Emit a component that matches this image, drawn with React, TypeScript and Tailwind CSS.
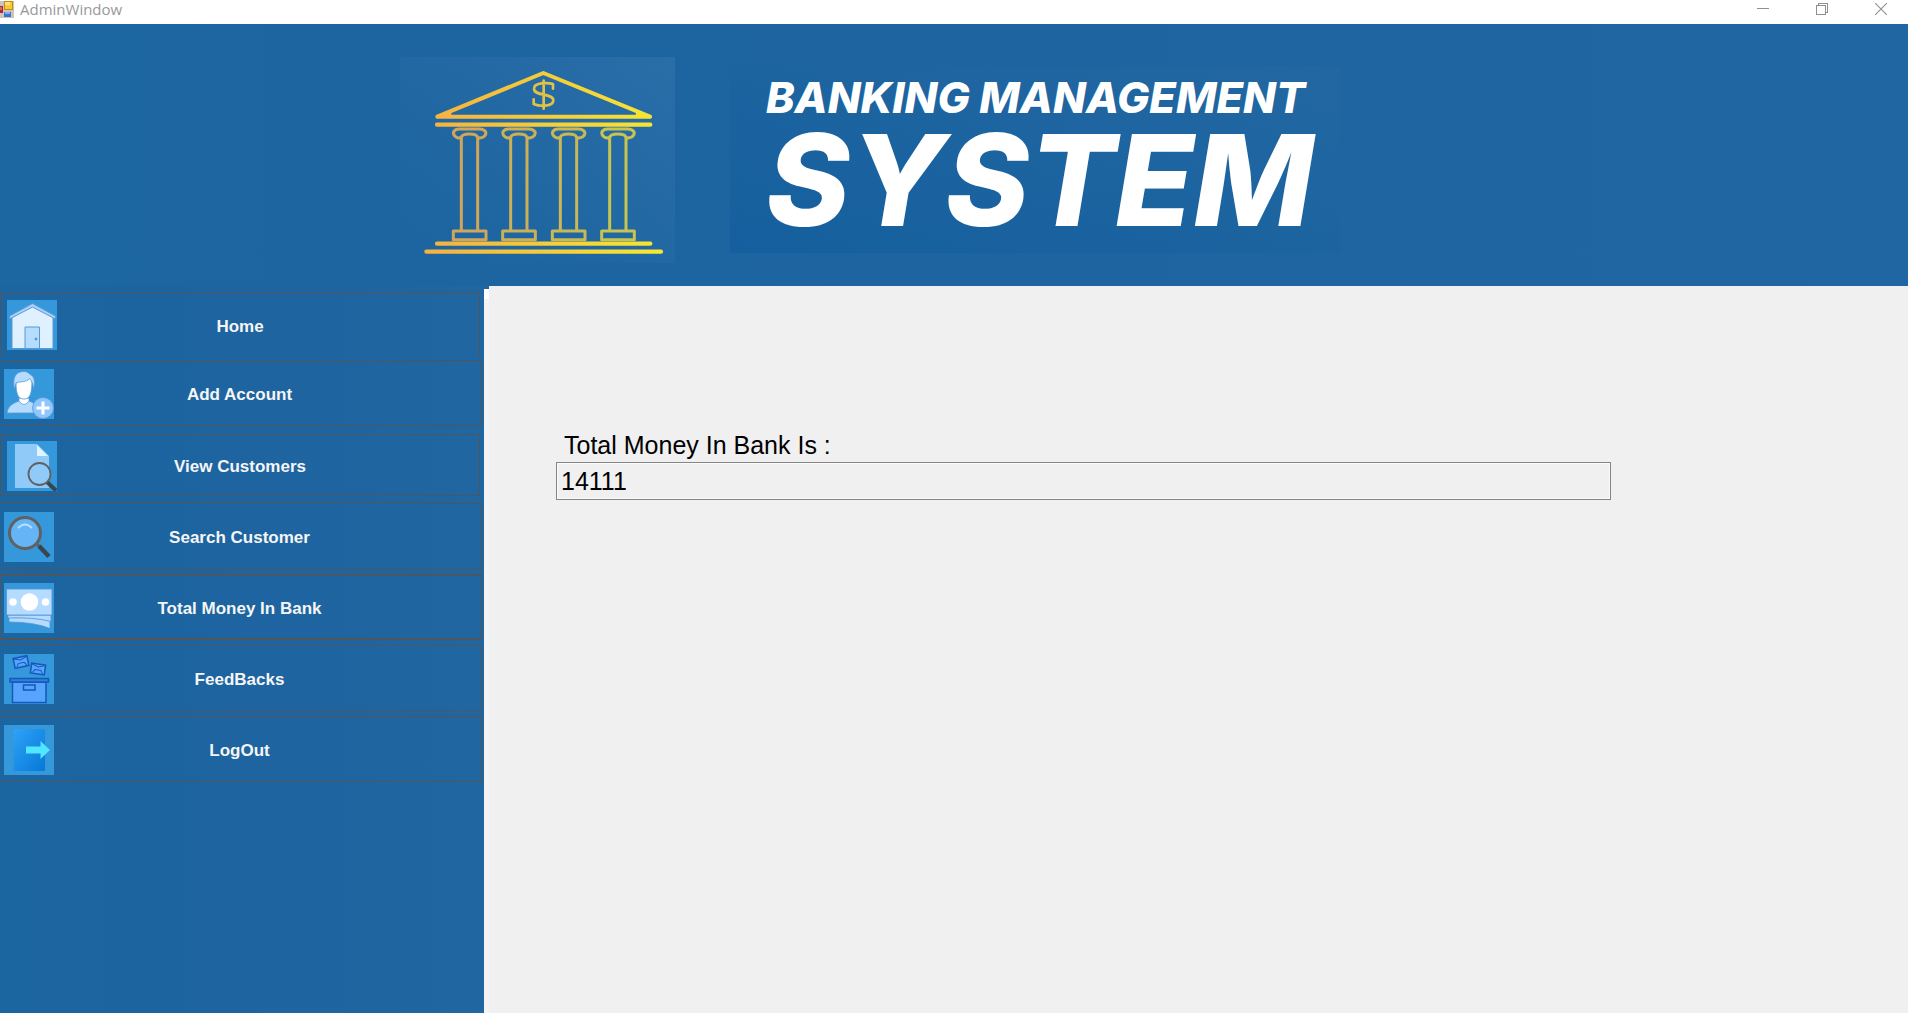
import React from "react";

function AppIcon() {
  return (
    <svg width="14" height="18" viewBox="0 0 14 18" aria-hidden="true">
      <rect x="0" y="1" width="14" height="17" fill="#c9c6c0" />
      <rect x="0" y="6" width="3" height="7" fill="#b3262b" />
      <rect x="0" y="7" width="2" height="3" fill="#d9656a" />
      <rect x="4" y="1" width="9" height="9" fill="#c78a12" />
      <rect x="5" y="2" width="7" height="7" fill="#fbc92f" />
      <rect x="5" y="2" width="5" height="3" fill="#fde07c" />
      <rect x="4" y="12" width="7" height="5" fill="#3f6fd0" />
      <rect x="5" y="12" width="5" height="2" fill="#85aef0" />
    </svg>
  );
}

function TitleBar() {
  const control = "flex h-6 w-[54px] items-start justify-center pt-[3px] text-[#8f8f8f]";
  return (
    <div className="flex h-6 shrink-0 items-start bg-white">
      <AppIcon />
      <h1 className="ml-1.5 font-['Open_Sans','Noto_Sans',sans-serif] text-[15px] leading-[18px] text-[#999999]">
        AdminWindow
      </h1>
      <div className="ml-auto flex gap-[5px]">
        <button type="button" aria-label="Minimize" className={control}>
          <svg width="12" height="12" viewBox="0 0 12 12" shapeRendering="crispEdges">
            <path d="M0 5.5H12" stroke="currentColor" />
          </svg>
        </button>
        <button type="button" aria-label="Restore" className={control}>
          <svg width="12" height="12" viewBox="0 0 12 12" fill="none" stroke="currentColor" shapeRendering="crispEdges">
            <path d="M0.5 2.5H9.5V11.5H0.5ZM2.5 2.5V0.5H11.5V9.5H9.5" />
          </svg>
        </button>
        <button type="button" aria-label="Close" className={control}>
          <svg width="12" height="12" viewBox="0 0 12 12" fill="none" stroke="currentColor">
            <path d="M0 0L12 12M12 0L0 12" strokeWidth="1.1" />
          </svg>
        </button>
      </div>
    </div>
  );
}

function BankLogo() {
  const columns = [
    { x: 208, color: "#d0a65a" },
    { x: 356, color: "#ccb058" },
    { x: 505, color: "#c9b855" },
    { x: 653, color: "#c8c450" },
  ];
  return (
    <svg width="275" height="206" viewBox="0 51 825 618" fill="none" role="img" aria-label="Bank" className="mt-[33px] shrink-0">
      <defs>
        <linearGradient id="gold" gradientUnits="userSpaceOnUse" x1="75" y1="0" x2="790" y2="0">
          <stop offset="0" stopColor="#f5b042" />
          <stop offset="1" stopColor="#f5e832" />
        </linearGradient>
        <linearGradient id="panel" x1="0" y1="1" x2="1" y2="0">
          <stop offset="0" stopColor="#1d66a1" stopOpacity="0" />
          <stop offset="0.5" stopColor="#2268a3" />
          <stop offset="1" stopColor="#2a6ea8" />
        </linearGradient>
      </defs>
      <rect x="0" y="51" width="825" height="618" fill="url(#panel)" />
      <g stroke="url(#gold)" strokeLinecap="round" strokeLinejoin="round">
        <path d="M112 230L430 99L750 230Z" strokeWidth="12" />
        <path d="M112 230L150 222M750 230L712 222" strokeWidth="9" />
        <path d="M111 254L751 254.1M111 611L751 611.1M79 635L783 635.1" strokeWidth="12.500" />
        <path d="M459 146V132C445 128 400 126 402 147C404 170 460 158 460 181C460 203 415 198 401 192V178M431 122V206" strokeWidth="8" opacity="0.9" />
      </g>
      {columns.map(({ x, color }) => (
        <g key={x} transform={`translate(${x} 0)`} stroke={color} strokeWidth="9" strokeLinejoin="round">
          <path d="M-24 570V292Q-32 296 -40 291Q-50 284 -47 275Q-42 267 -30 267H30Q42 267 49 275Q52 284 42 291Q32 296 25 292V570" />
          <path d="M-24 292C-22 282 -10 282 0 282S22 282 25 292" />
          <path d="M-48 573H50V599H-48Z" />
        </g>
      ))}
    </svg>
  );
}

function Header() {
  return (
    <header className="flex h-[262px] shrink-0 items-start bg-linear-to-r from-[#1c66a1] via-[#1d64a0] to-[#2066a2] pl-[400px]">
      <BankLogo />
      <div className="mt-[43px] ml-[55px] h-[186px] w-[610px] shrink-0 bg-linear-to-tr from-[#155f9e] via-[#1c64a0] to-[#2267a2] pl-9 font-['Inter','Liberation_Sans',sans-serif] font-extrabold whitespace-nowrap text-white italic">
        <p className="pt-2 text-[43px] leading-[44px]">BANKING MANAGEMENT</p>
        <p className="text-[127px] leading-[122px]">SYSTEM</p>
      </div>
    </header>
  );
}

function HomeIcon() {
  return (
    <g stroke="#5b98d6" strokeWidth="1">
      <path d="M5 17L25.500 6L46 17V48.500H5Z" fill="#dff0ff" />
      <path d="M25.500 3.500L48.500 16V19L25.500 7L2.500 19V16Z" fill="#a9d3fb" />
      <path d="M18 27H32.500V48.500H18Z" fill="#b5dbff" />
      <circle cx="29" cy="39" r="1" fill="#3f7fc4" />
    </g>
  );
}

function AddAccountIcon() {
  return (
    <g stroke="#5b98d6" strokeWidth="0.8">
      <path d="M3 44C4 36 10 34 16 31.500H24C30 34 35 36 35 44Z" fill="#b5dbff" />
      <path d="M15 29V32Q20 39 25 32V29Z" fill="#fff" />
      <path d="M12 13C12 24 13.500 30 20 30S28 24 28 9Z" fill="#fff" />
      <path d="M10.500 20C8 8 12 2.500 20 2.500C24 2.500 25 5 27 6C31 8 31 14 29.500 20C29 15 28 12 25.500 9.500C22 14 16 12 12 14Z" fill="#b5dbff" />
      <circle cx="39" cy="39" r="10.500" fill="#8fc6fb" />
      <path d="M39 32.500V45.500M32.500 39H45.500" stroke="#fff" strokeWidth="3" />
    </g>
  );
}

function ViewIcon() {
  return (
    <g>
      <path d="M8 3H30L42 15V47H8Z" fill="#90caf9" />
      <path d="M30 4V15H41Z" fill="#e1f5fe" />
      <path d="M40 41L49 49.500" stroke="#37474f" strokeWidth="4" />
      <circle cx="32.500" cy="33" r="11" fill="#90caf9" stroke="#616161" strokeWidth="1.800" />
    </g>
  );
}

function SearchIcon() {
  return (
    <g>
      <path d="M32 31L38 37" stroke="#616161" strokeWidth="3" />
      <path d="M35 34L45 44.500" stroke="#37474f" strokeWidth="4.500" />
      <circle cx="21" cy="21" r="15.500" fill="#64b5f6" stroke="#616161" strokeWidth="3" />
      <path d="M14 16Q21 9 28 16" fill="none" stroke="#bbdefb" strokeWidth="1.800" />
    </g>
  );
}

function MoneyIcon() {
  return (
    <g stroke="#4f90d4" strokeWidth="0.800">
      <path d="M5 34H46V45.500Q30 39 5 39Z" fill="#b5dbff" />
      <path d="M4 32H47V38.500Q30 34 4 35Z" fill="#b5dbff" />
      <path d="M2.500 6H48V32H2.500Z" fill="#b5dbff" />
      <g fill="#fff" stroke="none">
        <circle cx="25.500" cy="19" r="8.800" />
        <circle cx="9" cy="19" r="3.800" />
        <circle cx="41.500" cy="19" r="3.800" />
      </g>
    </g>
  );
}

function FeedbackIcon() {
  return (
    <g fill="#57a4ff" stroke="#1458b8" strokeWidth="1.500">
      <g transform="rotate(-12 17 8)">
        <path d="M10 3H24V13H10Z" />
        <path d="M10 3.500L17 6L24 3.500M12 12L14 9H20L22 12" fill="none" strokeWidth="1" />
      </g>
      <g transform="rotate(8 34 15)">
        <path d="M27 10H41V20H27Z" />
        <path d="M27 10.500L34 13L41 10.500M29 19L31 16H37L39 19" fill="none" strokeWidth="1" />
      </g>
      <path d="M8.500 28H42V48.500H8.500Z" />
      <path d="M6 24.500H44.500V28H6Z" fill="#2f7fdc" />
      <path d="M19.500 31H31V36H19.500Z" />
    </g>
  );
}

function LogoutIcon() {
  return (
    <g>
      <defs>
        <linearGradient id="door" x1="0" y1="0" x2="1" y2="1">
          <stop offset="0" stopColor="#2ea3f7" />
          <stop offset="1" stopColor="#0678d8" />
        </linearGradient>
      </defs>
      <rect x="9.500" y="4" width="31.500" height="42" rx="1.500" fill="url(#door)" />
      <path d="M22 21.500H36.500V16L46 25L36.500 34V28.500H22Z" fill="#50e6ff" />
    </g>
  );
}

const wide = "w-[482px] border-l-0 pl-1";
const inset = "w-[480px] border-l pl-1.5";

const items = [
  { label: "Home", Icon: HomeIcon, box: `${inset} mt-[6px] h-16 border-b-0` },
  { label: "Add Account", Icon: AddAccountIcon, box: `${wide} mt-1 h-[66px]` },
  { label: "View Customers", Icon: ViewIcon, box: `${inset} mt-2 h-[62px]` },
  { label: "Search Customer", Icon: SearchIcon, box: `${wide} mt-[7px] h-[66px]` },
  { label: "Total Money In Bank", Icon: MoneyIcon, box: "mt-[5px] h-[66px] w-[482px] border-y-2 border-l pl-[3px]" },
  { label: "FeedBacks", Icon: FeedbackIcon, box: `${wide} mt-[5px] h-[66px]` },
  { label: "LogOut", Icon: LogoutIcon, box: `${wide} mt-[5px] h-[66px]` },
];

function Sidebar() {
  return (
    <nav className="flex w-[484px] shrink-0 flex-col bg-linear-to-r from-[#1b65a1] via-[#1d64a0] to-[#2066a1]">
      {items.map(({ label, Icon, box }) => (
        <button
          key={label}
          type="button"
          className={`flex shrink-0 items-center border border-[#50565c] pt-px font-['Liberation_Sans',Arial,sans-serif] text-[17px] leading-5 font-bold text-[#f5f5f5] ${box}`}
        >
          <svg width="50" height="50" viewBox="0 0 50 50" aria-hidden="true" className="shrink-0 bg-[#3498db]">
            <Icon />
          </svg>
          <span className="flex-1 pt-[3px] pr-14 text-center">{label}</span>
        </button>
      ))}
    </nav>
  );
}

export default function App() {
  return (
    <div className="flex min-h-screen flex-col bg-[#1d64a0]">
      <TitleBar />
      <Header />
      <div className="flex flex-1">
        <Sidebar />
        <div className="mt-[3px] w-[5px] shrink-0 bg-[#f4f4f4]">
          <div className="h-2.5 bg-white" />
        </div>
        <main className="flex min-w-0 flex-1 flex-col bg-[#f0f0f0] pt-36 pl-[67px] font-['Liberation_Sans',Arial,sans-serif] text-[25px] text-black">
          <label htmlFor="total" className="pb-px pl-2 leading-[31px]">
            Total Money In Bank Is :
          </label>
          <input
            id="total"
            type="text"
            readOnly
            defaultValue="14111"
            className="h-[38px] w-[78%] border border-[#858585] bg-[#f0f0f0] px-1 shadow-[inset_0_0_0_1px_#fafafa] outline-none"
          />
        </main>
      </div>
    </div>
  );
}
